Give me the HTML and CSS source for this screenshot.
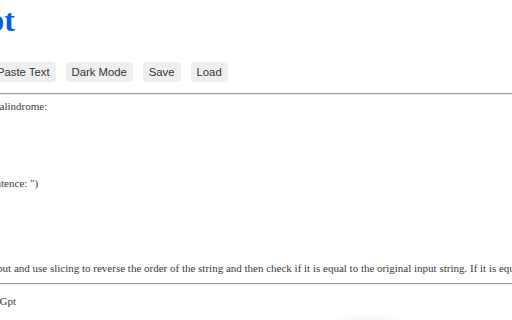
FILE: index.html
```html
<!DOCTYPE html>
<html>
<head>
<meta charset="utf-8">
<link rel="stylesheet" href="styles.css">
</head>
<body>
<div class="page">
  <h1 class="title">ChatGpt</h1>
  <div class="toolbar">
    <button class="btn">Paste Text</button>
    <button class="btn">Dark Mode</button>
    <button class="btn">Save</button>
    <button class="btn">Load</button>
  </div>
  <hr class="rule">
  <div class="answer">
    <p class="line">Check if the string is a palindrome:</p>
    <p class="line">def is_palin(s):</p>
    <p class="line">&nbsp;return s == s[::-1]</p>
    <p class="line">&nbsp;</p>
    <p class="line">&nbsp;</p>
    <p class="line">&nbsp;</p>
    <p class="line">sent = input("Enter a sentence: ")</p>
    <p class="line">if is_palin(sent):</p>
    <p class="line">&nbsp;print("Yes")</p>
    <p class="line">else:</p>
    <p class="line">&nbsp;print("No")</p>
    <p class="line">&nbsp;</p>
    <p class="line long">The program gets the input and use slicing to reverse the order of the string and then check if it is equal to the original input string. If it is equal, the string is a palindrome.</p>
  </div>
  <hr class="rule rule-bottom">
  <p class="footer">© 2023 Powered by ChatGpt</p>
  <div class="glow"></div>
</div>
</body>
</html>
```
FILE: styles.css
```css
html, body {
  margin: 0;
  padding: 0;
  background: #fff;
  overflow: hidden;
  width: 512px;
  height: 320px;
}
.page {
  margin-left: -106px;
  width: 1000px;
}
.title {
  margin: 0;
  padding-top: 2px;
  font-family: "Liberation Serif", serif;
  font-weight: bold;
  font-size: 32px;
  line-height: 36px;
  color: #0b5ed7;
}
.toolbar {
  display: flex;
  gap: 10px;
  margin-top: 24px;
  padding-left: 97px;
}
.btn {
  font-family: "Liberation Sans", Arial, sans-serif;
  font-size: 11.3px;
  color: #333;
  background: #efefef;
  border: none;
  border-radius: 4px;
  padding: 3px 6px;
  height: 20px;
}
.rule {
  margin: 11px 0 0 0;
  width: 950px;
}
.answer {
  padding-top: 5px;
  margin-left: -2px;
  font-family: "Liberation Serif", serif;
  font-size: 11px;
  color: #3a3a3a;
}
.line {
  margin: 0;
  line-height: 12.8px;
  white-space: nowrap;
}
.long {
  margin-top: 8px;
}
.rule-bottom {
  margin-top: 9px;
}
.footer {
  margin: 10px 0 0 -6px;
  font-family: "Liberation Serif", serif;
  font-size: 11px;
  line-height: 12.8px;
  color: #3a3a3a;
  white-space: nowrap;
}
.glow {
  margin: 13px 0 0 441px;
  width: 62px;
  height: 20px;
  border-radius: 6px;
  box-shadow: 0 0 8px rgba(60, 140, 255, 0.16);
}
```
